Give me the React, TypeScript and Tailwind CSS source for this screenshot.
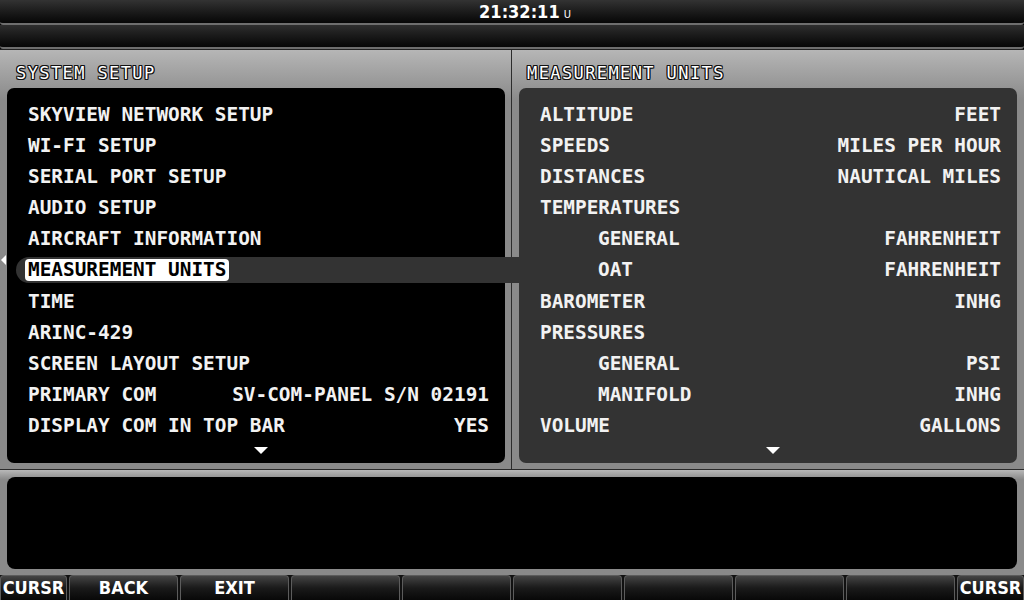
import React from 'react';

// 좌측 메뉴 항목
const systemRows = [
  { label: 'SKYVIEW NETWORK SETUP' },
  { label: 'WI-FI SETUP' },
  { label: 'SERIAL PORT SETUP' },
  { label: 'AUDIO SETUP' },
  { label: 'AIRCRAFT INFORMATION' },
  { label: 'MEASUREMENT UNITS', selected: true },
  { label: 'TIME' },
  { label: 'ARINC-429' },
  { label: 'SCREEN LAYOUT SETUP' },
  { label: 'PRIMARY COM', value: 'SV-COM-PANEL S/N 02191' },
  { label: 'DISPLAY COM IN TOP BAR', value: 'YES' },
];

// 우측 단위 항목
const unitRows = [
  { label: 'ALTITUDE', value: 'FEET' },
  { label: 'SPEEDS', value: 'MILES PER HOUR' },
  { label: 'DISTANCES', value: 'NAUTICAL MILES' },
  { label: 'TEMPERATURES' },
  { label: 'GENERAL', value: 'FAHRENHEIT', indent: true },
  { label: 'OAT', value: 'FAHRENHEIT', indent: true },
  { label: 'BAROMETER', value: 'INHG' },
  { label: 'PRESSURES' },
  { label: 'GENERAL', value: 'PSI', indent: true },
  { label: 'MANIFOLD', value: 'INHG', indent: true },
  { label: 'VOLUME', value: 'GALLONS' },
];

const buttons = ['CURSR', 'BACK', 'EXIT', '', '', '', '', '', '', 'CURSR'];

function DownArrow() {
  return (
    <div className="flex justify-center pl-[10px] mt-[6px]">
      <div className="w-0 h-0 border-l-[7px] border-r-[7px] border-t-[7px] border-l-transparent border-r-transparent border-t-white" />
    </div>
  );
}

function PanelTitle({ children, pl }: { children: string; pl: string }) {
  return (
    <div className={`h-[38px] pt-[13px] ${pl}`}>
      <span className="block text-[17px] leading-[20px] tracking-[1.4px] text-white [text-shadow:_-1px_0_#111,_1px_0_#111,_0_-1px_#111,_0_1px_#111,_1px_1px_#111,_-1px_-1px_#111,_1px_-1px_#111,_-1px_1px_#111]">
        {children}
      </span>
    </div>
  );
}

export default function App() {
  return (
    <div className="w-[1024px] h-[600px] bg-black flex flex-col overflow-hidden font-['DejaVu_Sans_Mono',monospace] select-none">
      {/* 상단 시간 바 */}
      <div className="h-[25px] bg-linear-to-b from-[#333] to-[#070707] border-b-2 border-[#6e6e6e] rounded-b-[3px] flex items-center justify-center pl-[26px]">
        <span className="font-['DejaVu_Sans_Condensed',sans-serif] font-bold text-[18px] leading-[23px] text-white">
          21:32:11
        </span>
        <span className="font-['DejaVu_Sans_Condensed',sans-serif] text-[11px] leading-[10px] text-white ml-[4px] mt-[7px]">
          U
        </span>
      </div>
      <div className="h-[24px] bg-linear-to-b from-[#2e2e2e] to-[#070707] border-b-2 border-[#6e6e6e] rounded-b-[3px]" />

      {/* 메인 패널 */}
      <div className="h-[420px] flex border-t border-[#222]">
        {/* SYSTEM SETUP */}
        <div className="w-[511px] flex flex-col bg-linear-to-b from-[#b6b6b6] to-[#8a8a8a] to-[12%] pl-[7px] pr-[6px] pb-[6px]">
          <PanelTitle pl="pl-[9px]">SYSTEM SETUP</PanelTitle>
          <div className="flex-1 bg-black rounded-[7px] pt-[11px]">
            {systemRows.map((row, i) => (
              <div
                key={i}
                className="relative h-[31.1px] flex items-center justify-between pl-[21px] pr-[16px] text-[19.4px] font-bold text-[#f2f2f2]"
              >
                {row.selected && (
                  <>
                    <div className="absolute left-[9px] -right-[14px] top-[3px] bottom-[3px] bg-[#333] rounded-l-full z-10" />
                    <div className="absolute -right-[14px] -top-[3px] w-[6px] h-[6px] translate-x-[6px] z-10 bg-[radial-gradient(circle_at_100%_0,transparent_6px,#333_6.5px)]" />
                    <div className="absolute -right-[14px] -bottom-[3px] w-[6px] h-[6px] translate-x-[6px] z-10 bg-[radial-gradient(circle_at_100%_100%,transparent_6px,#333_6.5px)]" />
                    <div className="absolute -left-[6px] top-[1px] w-0 h-0 border-t-[5px] border-b-[5px] border-r-[5px] border-t-transparent border-b-transparent border-r-white" />
                  </>
                )}
                <span
                  className={
                    row.selected
                      ? 'relative z-20 -ml-[3px] px-[3px] h-[22px] leading-[22px] bg-white text-black rounded-[4px]'
                      : 'relative z-20'
                  }
                >
                  {row.label}
                </span>
                {row.value && <span className="relative z-20">{row.value}</span>}
              </div>
            ))}
            <DownArrow />
          </div>
        </div>

        <div className="w-px bg-[#2c2c2c]" />

        {/* MEASUREMENT UNITS */}
        <div className="flex-1 flex flex-col bg-linear-to-b from-[#b6b6b6] to-[#8a8a8a] to-[12%] pl-[7px] pr-[7px] pb-[6px]">
          <PanelTitle pl="pl-[8px]">MEASUREMENT UNITS</PanelTitle>
          <div className="flex-1 bg-[#333] rounded-[7px] pt-[11px]">
            {unitRows.map((row, i) => (
              <div
                key={i}
                className="h-[31.1px] flex items-center justify-between pl-[21px] pr-[16px] text-[19.4px] font-bold text-[#f2f2f2]"
              >
                <span className={row.indent ? 'pl-[58px]' : ''}>{row.label}</span>
                {row.value && <span>{row.value}</span>}
              </div>
            ))}
            <DownArrow />
          </div>
        </div>
      </div>

      {/* 하단 메시지 영역 */}
      <div className="h-[106px] flex flex-col border-t border-[#2a2a2a] bg-linear-to-b from-[#b8b8b8] to-[#8a8a8a] to-[9%] px-[7px] pt-[7px] pb-[6px]">
        <div className="flex-1 bg-black rounded-[8px]" />
      </div>

      {/* 소프트키 */}
      <div className="h-[25px] flex gap-[2px] bg-[#111]">
        {buttons.map((b, i) => (
          <div
            key={i}
            className={`${i === 0 ? 'w-[67px]' : i === buttons.length - 1 ? 'flex-1' : 'w-[109px]'} h-full flex items-center justify-center rounded-t-[4px] border border-b-0 border-[#5c5c5c] bg-linear-to-b from-[#454545] via-[#1a1a1a] to-[#080808]`}
          >
            <span className="font-['DejaVu_Sans_Condensed',sans-serif] font-bold text-[18px] leading-[22px] text-white">
              {b}
            </span>
          </div>
        ))}
      </div>
    </div>
  );
}
